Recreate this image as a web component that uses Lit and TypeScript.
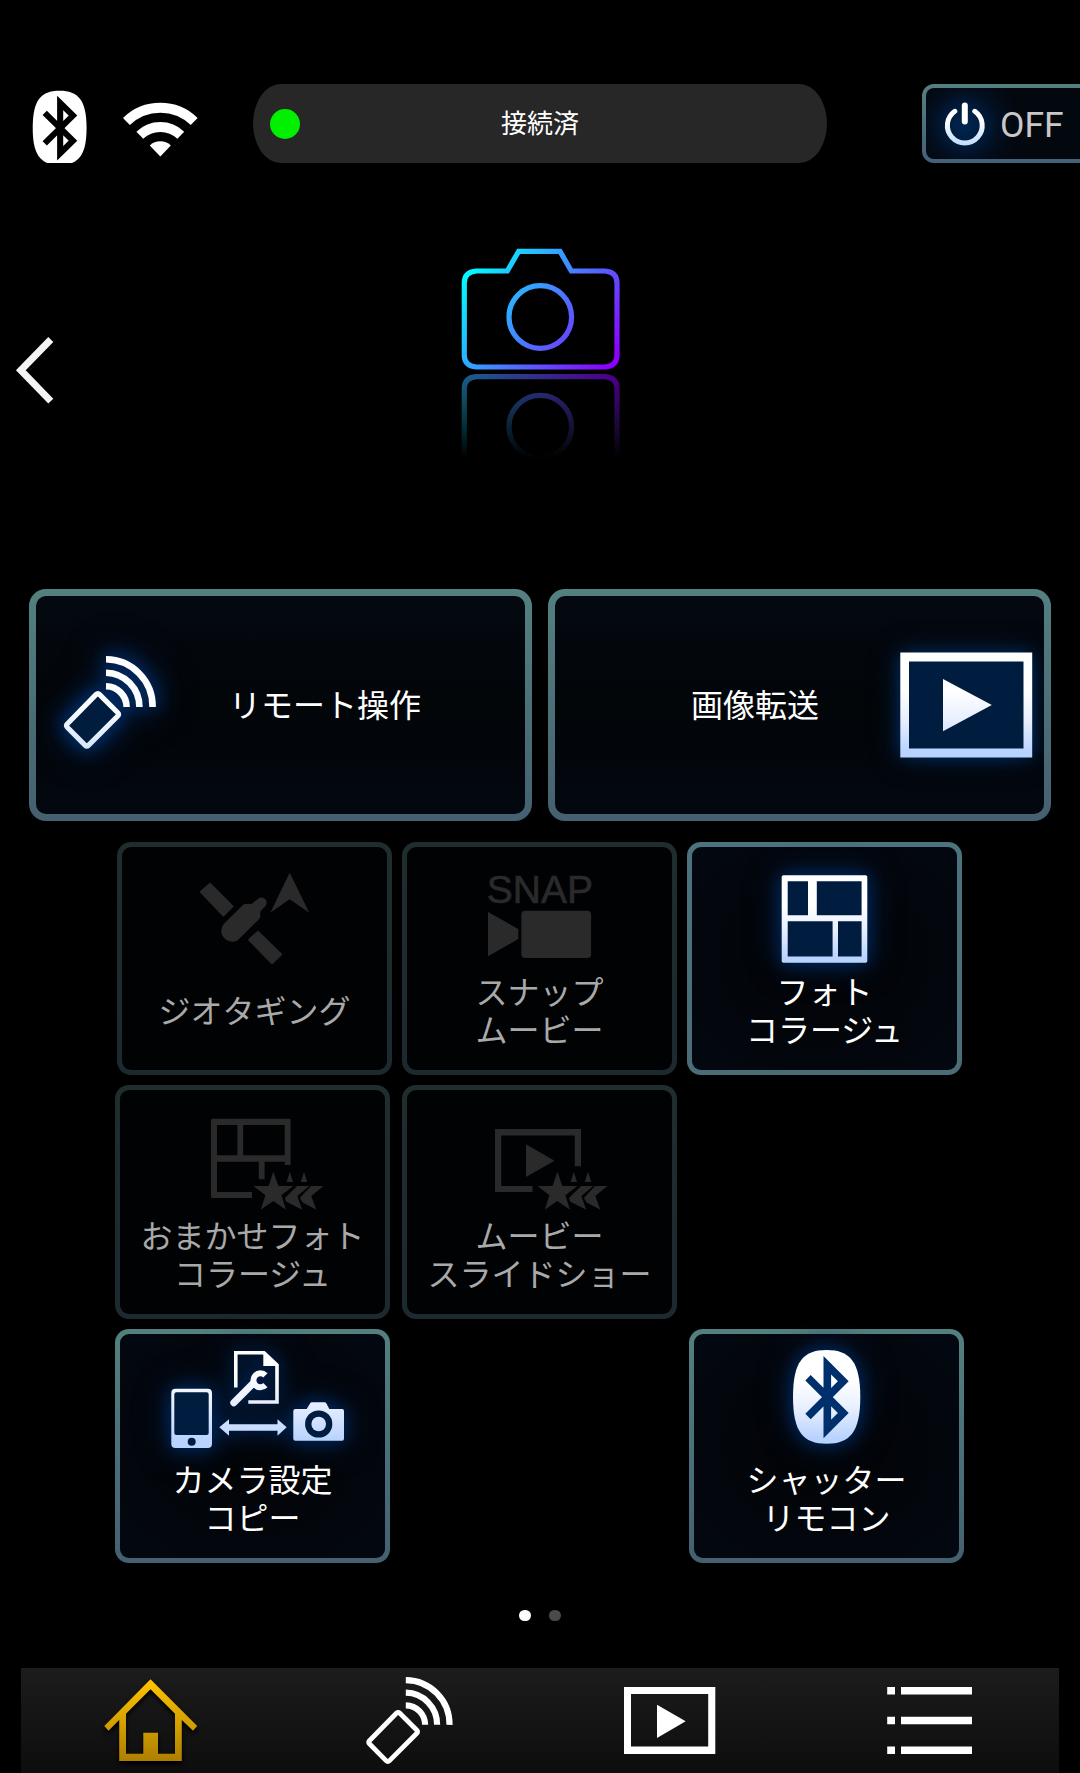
import { LitElement, html, svg, css } from "lit";
import { customElement, property } from "lit/decorators.js";

/* Handheld remote with three signal arcs, on a 92 x 93 canvas. */
const remoteShape = () => svg`
  <path class="line" stroke-width="5.1" stroke-linejoin="round"
    d="M32.2 38.4Q33.8 36.8 35.4 38.4L53.8 56.8Q55.4 58.4 53.8 60L24.4 89.4Q22.8 91 21.2 89.4L3.2 71.2Q1.6 69.6 3.2 68Z"/>
  <path class="line" stroke-width="6.6" d="M42 3.3A47 47 0 0 1 88.6 51M42 16.7A34 34 0 0 1 75.4 51M42 30.2A20.8 20.8 0 0 1 62.6 51"/>`;

const btRune = () => svg`
  <path class="rune" d="M808 1377.7L843.3 1413L827.3 1429V1365.2L843.3 1381.2L808 1416.5"/>`;

const btOval =
  "M826.6 1350C850 1350 860.3 1362 860.3 1397S850 1443.7 826.6 1443.7S793 1432 793 1397S803 1350 826.6 1350Z";

/* A star followed by the trailing edges of two more. */
const starTrail = () => svg`
  <path class="solid" d="M273.4 1171.7L278.4 1186H293.3L281.4 1195.3L286 1209.7L273.4 1201L260.7 1209.7L265.4 1195.3L253.5 1186H268.6Z
    M289.8 1171.7L293 1182H286.6ZM304 1171.7L307.2 1182H300.8Z
    M297.1 1186H309.4L297.3 1196L302.2 1209.7L286 1201.5L285 1198L288.5 1194.5Z
    M311.1 1186H323.4L311.3 1196L316.4 1209.7L302.6 1202.5L300 1198L303.5 1194Z"/>`;

const icons: Record<string, () => unknown> = {
  remote: () => svg`<g transform="translate(64 656)">
    <path class="pit" d="M34 38L54 58L23 90L3 70Z"/>${remoteShape()}</g>`,
  transfer: () => svg`
    <rect class="pit" x="902" y="655" width="128" height="100"/>
    <path class="solid" fill-rule="evenodd" d="M900.3 652.6H1032.2V757.4H900.3ZM909 661.5V748.5H1023.5V661.5Z"/>
    <path class="solid" d="M943 679L991.8 705L943 731.3Z"/>`,
  geo: () => svg`
    <path class="solid round" d="M201.2 891.8L210 884.2L232.2 906.4L223.4 915.2ZM249.5 939.8L258 932.2L280.8 954.4L272 962.8Z"/>
    <path class="solid" d="M289.7 872.7L309.3 912.7L289.7 899.3L270.3 912.7Z"/>
    <path class="solid" d="M243.5 904.5Q246 903.4 251.5 904L258 898.9A5 5 0 0 1 265 906.5L260.3 911.5V916.5Q260.3 918 258.5 919.8L239.5 938.5C233 946 220 939 221.3 930Q221.6 926.2 224.2 923.6Z"/>`,
  snap: () => svg`
    <text class="snap" x="486.8" y="903.4">SNAP</text>
    <path class="solid" d="M488 912L518.3 929V939L488 956.3Z"/>
    <rect class="solid" x="521.3" y="910.7" width="69.8" height="47.3" rx="4"/>`,
  collage: () => svg`
    <rect class="pit" x="784" y="878" width="81" height="82"/>
    <path class="solid" fill-rule="evenodd" d="M783 875.3H866L867.3 876.6V961.4L866 962.7H783L781.7 961.4V876.6Z
      M787.7 881.2V915.2H808V881.2ZM816.8 881.2V915.2H861.6V881.2ZM787.7 921.2V956.5H832.6V921.2ZM838 921.2V956.5H861.6V921.2Z"/>`,
  autoCollage: () => svg`
    <path class="solid" d="M212 1118.7H289.6L290.6 1119.7V1165H284.7V1161.7H264.6V1179.3H258.8V1161.7H217V1192H252V1198H212L211 1197V1119.7ZM217 1125V1155.3H237.4V1125ZM243.2 1125V1155.3H284.7V1125Z" fill-rule="evenodd"/>
    ${starTrail()}`,
  slideshow: () => svg`
    <path class="solid" d="M495 1129H581V1166.3H574.8V1135.4H501.2V1186H532.5V1192H495ZM526 1144.3L554.6 1160.7L526 1177Z"/>
    <g transform="translate(284 0)">${starTrail()}</g>`,
  copy: () => svg`
    <rect class="pit" x="173" y="1390" width="37" height="54" rx="4"/>
    <circle class="pit" cx="318.7" cy="1424" r="14"/>
    <path class="solid" fill-rule="evenodd" d="M175.5 1388.7H207.8Q212 1388.7 212 1393V1443.8Q212 1448 207.8 1448H175.5Q171.3 1448 171.3 1443.8V1393Q171.3 1388.7 175.5 1388.7Z
      M176.5 1392.3Q174.3 1392.3 174.3 1394.5V1433Q174.3 1435 176.3 1435H206.7Q208.7 1435 208.7 1433V1394.5Q208.7 1392.3 206.5 1392.3Z
      M191.7 1437.7A4 4 0 1 0 191.7 1445.7A4 4 0 1 0 191.7 1437.7Z"/>
    <path class="line" stroke-width="3.6" d="M235.8 1387.5V1352.8H264L277 1365V1402H248.3"/>
    <path class="solid" d="M263.3 1352L278 1366H263.3Z"/>
    <path class="line" stroke-width="7" stroke-linecap="round" d="M233.8 1402.8L252.5 1384"/>
    <path class="line" stroke-width="6" d="M265.4 1375.4A7 7 0 1 0 265.4 1385.2"/>
    <path class="solid" d="M219.3 1427.3L229 1419.3V1424.3H277.5V1419.3L286.7 1427.3L277.5 1435.7V1430.7H229V1435.7Z"/>
    <path class="solid" fill-rule="evenodd" d="M295.5 1409H306.7L310 1403.4Q310.7 1402.3 312 1402.3H324.5Q325.8 1402.3 326.4 1403.4L329.3 1409H342Q344 1409 344 1411V1438.7Q344 1440.7 342 1440.7H295.5Q293.3 1440.7 293.3 1438.7V1411Q293.3 1409 295.5 1409Z
      M318.7 1410.4A13.6 13.6 0 1 0 318.7 1437.6A13.6 13.6 0 1 0 318.7 1410.4Z"/>
    <circle class="solid" cx="318.7" cy="1424" r="7.3"/>`,
  bluetooth: () => svg`<path class="solid" d=${btOval}/>${btRune()}`,
};

/* Vertical extent of the white-to-blue shading of each lit icon. */
const shades: Record<string, [number, number]> = {
  remote: [10, 96],
  transfer: [690, 752],
  collage: [905, 958],
  copy: [1370, 1440],
  bluetooth: [1380, 1438],
};

@customElement("menu-tile")
class MenuTile extends LitElement {
  @property() icon = "";
  @property() box = "";
  @property({ type: Array }) lines: string[] = [];
  @property({ type: Boolean, reflect: true }) dim = false;
  @property({ type: Boolean, reflect: true }) wide = false;
  @property({ type: Boolean, reflect: true }) flip = false;

  static styles = css`
    :host {
      display: flex;
      flex-direction: column;
      box-sizing: border-box;
      width: 275px;
      border: 5px solid transparent;
      border-radius: 14px;
      background:
        radial-gradient(ellipse at 50% 50%, #020407 20%, #03070f 90%) padding-box,
        linear-gradient(#53807f, #4a6f7a 55%, #456070) border-box;
      color: #fff;
    }
    :host([icon="collage"]) {
      background:
        radial-gradient(ellipse at 50% 50%, #020407 20%, #03070f 90%) padding-box,
        linear-gradient(#4c747e, #4a6c76) border-box;
    }
    :host([dim]) {
      background:
        linear-gradient(#010204, #010204) padding-box,
        linear-gradient(#1f2d2f, #1c2a30) border-box;
      color: #a9a9a9;
    }
    :host([wide]) {
      flex-direction: row;
      width: 503px;
      border-width: 7px;
      border-radius: 17px;
      background:
        linear-gradient(#040810, #020609 50%, #03070f) padding-box,
        linear-gradient(#548080, #456070) border-box;
    }
    :host([flip]) {
      flex-direction: row-reverse;
    }
    .art {
      display: block;
      flex: none;
      overflow: visible;
      filter: drop-shadow(0 0 8px #00285c) drop-shadow(0 0 14px #001e48);
    }
    :host([icon="remote"]) .art {
      filter: drop-shadow(0 0 8px #002f6a) drop-shadow(0 0 10px #002450) drop-shadow(0 0 14px #001634);
    }
    :host([icon="transfer"]) .art {
      overflow: hidden;
      filter: none;
    }
    :host([icon="transfer"]) .pit {
      filter: drop-shadow(0 0 8px #003068) drop-shadow(0 0 12px #001c40);
    }
    :host([dim]) .art {
      filter: none;
    }
    .solid {
      fill: url(#sheen);
    }
    .line {
      fill: none;
      stroke: url(#sheen);
    }
    .pit {
      fill: #001d40;
    }
    .rune {
      fill: none;
      stroke: #00306c;
      stroke-width: 7.6;
      stroke-miterlimit: 4;
    }
    :host([dim]) .solid {
      fill: #2a2a2b;
    }
    :host([dim]) .round {
      stroke: #2a2a2b;
      stroke-width: 2.5;
      stroke-linejoin: round;
    }
    .snap {
      font: 39px "Liberation Sans", sans-serif;
      fill: #2a2a2b;
      stroke: #2a2a2b;
      stroke-width: 0.6;
    }
    .label {
      flex: 1;
      display: flex;
      flex-direction: column;
      align-items: center;
      justify-content: center;
      padding-bottom: 6px;
      font: 400 32px/38px "Noto Sans CJK JP", sans-serif;
      white-space: nowrap;
      z-index: 1;
    }
    :host([wide]) .label {
      padding: 0 61px 4px 0;
    }
    :host([flip]) .label {
      padding: 0 0 4px 91px;
    }
  `;

  render() {
    const [, y, w, h] = this.box.split(" ").map(Number);
    const [top, bottom] = shades[this.icon] ?? [y, y + h];
    const remote = this.icon === "remote";
    return html`
      <svg class="art" width=${w} height=${h} viewBox=${this.box}>
        <defs>
          <linearGradient id="sheen" gradientUnits="userSpaceOnUse" x1="0" x2="0" y1=${top} y2=${bottom}>
            <stop offset="0" stop-color="#fff"></stop>
            <stop offset=".5" stop-color=${remote ? "#fbfcff" : "#e6eeff"}></stop>
            <stop offset="1" stop-color=${remote ? "#cfe4f8" : "#b9d3ff"}></stop>
          </linearGradient>
        </defs>
        ${icons[this.icon]?.()}
      </svg>
      <div class="label">${this.lines.map((t) => html`<span>${t}</span>`)}</div>
    `;
  }
}

@customElement("app-root")
class AppRoot extends LitElement {
  static styles = css`
    :host {
      display: flex;
      flex-direction: column;
      box-sizing: border-box;
      width: 1080px;
      height: 1773px;
      padding-top: 84px;
      overflow: hidden;
      background: #000;
      color: #fff;
      font-family: "Noto Sans CJK JP", sans-serif;
    }
    svg {
      display: block;
      flex: none;
    }
    .header {
      display: flex;
      height: 79px;
    }
    .status-icons {
      overflow: hidden;
    }
    .rune {
      fill: none;
      stroke: #000;
      stroke-width: 7.6;
    }
    .pill {
      display: grid;
      grid-template-columns: 30px 1fr 30px;
      align-items: center;
      box-sizing: border-box;
      width: 574px;
      padding: 0 17px;
      margin-right: 95px;
      border-radius: 28px / 40px;
      background: #272727;
      font-size: 26px;
      line-height: 38px;
      text-align: center;
    }
    .caption {
      padding-bottom: 3px;
    }
    .led {
      width: 30px;
      height: 30px;
      border-radius: 50%;
      background: #00f000;
    }
    .power {
      display: flex;
      align-items: center;
      box-sizing: border-box;
      width: 158px;
      border: 4.5px solid transparent;
      border-right: 0;
      border-radius: 12px 0 0 12px;
      background:
        radial-gradient(circle at 39px 37px, #002550 0, #001c3e 18px, #030d1c 36px, #03070e 56px) padding-box,
        linear-gradient(#54807f, #45607a) border-box;
      color: #c8c8c8;
      font: 400 35.5px/40px Roboto, sans-serif;
    }
    .power-label {
      padding-top: 3px;
    }
    .hero {
      display: grid;
      grid-template-columns: 1fr auto 1fr;
      align-items: start;
      height: 426px;
    }
    .back {
      margin-top: 167px;
    }
    .camera {
      margin-top: 82px;
    }
    .primary {
      display: flex;
      gap: 16px;
      height: 232px;
      padding-left: 29px;
      margin-bottom: 21px;
    }
    .row {
      display: flex;
      gap: 12px;
      height: 234px;
      margin: 0 0 10px 115px;
    }
    .row.first {
      gap: 10px;
      height: 233px;
      margin-left: 117px;
    }
    .row.last {
      width: 849px;
      justify-content: space-between;
      margin-bottom: 0;
    }
    .pager {
      flex: 1;
      display: flex;
      align-items: center;
      justify-content: center;
      gap: 18.5px;
    }
    .dot {
      width: 11.5px;
      height: 11.5px;
      border-radius: 50%;
      background: #4a4a4a;
    }
    .dot.on {
      background: #fff;
    }
    .nav {
      display: grid;
      grid-template-columns: repeat(4, 1fr);
      height: 105px;
      margin: 0 21px;
      background: linear-gradient(#1c1c1c, #0d0d0d);
    }
    .nav .line {
      fill: none;
      stroke: #fff;
    }
    .house {
      filter: drop-shadow(0 3px 2px #000);
    }
  `;

  private camera() {
    return svg`
      <path d="M507.3 271H476.3Q464.3 272 464.3 283V355Q464.3 366 476.3 367H605Q617 366 617 355V283Q617 272 605 271H571.3L560 251.3H518.7L507.3 271Z"/>
      <circle cx="540.3" cy="317" r="31.3"/>`;
  }

  render() {
    return html`
      <div class="header">
        <svg class="status-icons" width="253" height="79" viewBox="0 84 253 79">
          <g transform="translate(59.6 128) scale(.8 .79) translate(-826.6 -1397)">
            <path fill="#fff" d=${btOval}></path>${btRune()}
          </g>
          <g transform="translate(160.3 156.5) scale(.985)" fill="none" stroke="#fff">
            <path stroke-width="10" d="M-34.4 -35.6A49.5 49.5 0 0 1 34.4 -35.6M-20.8 -21.6A30 30 0 0 1 20.8 -21.6"></path>
            <path fill="#fff" stroke="none" d="M0 0L-10.7 -11.2A15.5 15.5 0 0 1 10.7 -11.2Z"></path>
          </g>
        </svg>
        <div class="pill"><span class="led"></span><span class="caption">接続済</span></div>
        <div class="power">
          <svg width="74" height="70" viewBox="926.5 88.5 74 70" fill="none" stroke-linecap="round">
            <defs>
              <linearGradient id="ring" gradientUnits="userSpaceOnUse" x1="0" y1="120" x2="0" y2="145">
                <stop offset="0" stop-color="#fff"></stop>
                <stop offset="1" stop-color="#bfdcff"></stop>
              </linearGradient>
            </defs>
            <path stroke="url(#ring)" stroke-width="5" d="M955.3 110.8A17.4 17.4 0 1 0 975.3 110.8"></path>
            <path stroke="#fff" stroke-width="6" d="M965.3 105V121"></path>
          </svg>
          <span class="power-label">OFF</span>
        </div>
      </div>

      <div class="hero">
        <svg class="back" width="60" height="80" viewBox="0 330 60 80" fill="none">
          <path stroke="#f4f4f4" stroke-width="7" d="M50.8 339.5L20.8 370.3L50.8 401.1"></path>
        </svg>
        <svg class="camera" width="160" height="215" viewBox="460 245 160 215" fill="none">
          <defs>
            <linearGradient id="neon" gradientUnits="userSpaceOnUse" x1="472" y1="262" x2="608" y2="367">
              <stop offset="0" stop-color="#00ffff"></stop>
              <stop offset="1" stop-color="#8c00ff"></stop>
            </linearGradient>
            <linearGradient id="fade" gradientUnits="userSpaceOnUse" x1="0" y1="374" x2="0" y2="458">
              <stop offset="0" stop-color="#fff" stop-opacity=".56"></stop>
              <stop offset="1" stop-color="#fff" stop-opacity="0"></stop>
            </linearGradient>
            <mask id="mirror" maskUnits="userSpaceOnUse" x="460" y="370" width="160" height="90">
              <rect x="460" y="370" width="160" height="88" fill="url(#fade)"></rect>
            </mask>
          </defs>
          <g stroke="url(#neon)" stroke-width="5.2">${this.camera()}</g>
          <g mask="url(#mirror)">
            <g stroke="url(#neon)" stroke-width="5.2" transform="translate(0 743.7) scale(1 -1)">${this.camera()}</g>
          </g>
        </svg>
      </div>

      <div class="primary">
        <menu-tile wide icon="remote" box="36 596 150 218" .lines=${["リモート操作"]}></menu-tile>
        <menu-tile wide flip icon="transfer" box="864 596 180 218" .lines=${["画像転送"]}></menu-tile>
      </div>

      <div class="row first">
        <menu-tile dim icon="geo" box="122 847 265 106" .lines=${["ジオタギング"]}></menu-tile>
        <menu-tile dim icon="snap" box="407 847 265 106" .lines=${["スナップ", "ムービー"]}></menu-tile>
        <menu-tile icon="collage" box="692 847 265 106" .lines=${["フォト", "コラージュ"]}></menu-tile>
      </div>
      <div class="row">
        <menu-tile dim icon="autoCollage" box="120 1090 265 108" .lines=${["おまかせフォト", "コラージュ"]}></menu-tile>
        <menu-tile dim icon="slideshow" box="407 1090 265 108" .lines=${["ムービー", "スライドショー"]}></menu-tile>
      </div>
      <div class="row last">
        <menu-tile icon="copy" box="120 1334 265 107" .lines=${["カメラ設定", "コピー"]}></menu-tile>
        <menu-tile icon="bluetooth" box="694 1334 265 107" .lines=${["シャッター", "リモコン"]}></menu-tile>
      </div>

      <div class="pager"><span class="dot on"></span><span class="dot"></span></div>

      <div class="nav">
        <svg width="259" height="105" viewBox="21 1668 259 105">
          <defs>
            <linearGradient id="gold" gradientUnits="userSpaceOnUse" x1="0" y1="1680" x2="0" y2="1761">
              <stop offset="0" stop-color="#ffc400"></stop>
              <stop offset="1" stop-color="#ae7f00"></stop>
            </linearGradient>
          </defs>
          <path class="house" fill="url(#gold)" fill-rule="evenodd"
            d="M150.5 1679.3L197.2 1726L193 1730.7L181.8 1720V1761H119.2V1720L108.5 1730.7L104.3 1726ZM150.5 1689.3L126 1713.7V1753.7H143.3V1732.7H158V1753.7H175V1713.7Z"></path>
        </svg>
        <svg width="259" height="105" viewBox="281 1668 259 105">
          <g transform="translate(366.4 1677) scale(.938)">
            ${remoteShape()}
          </g>
        </svg>
        <svg width="259" height="105" viewBox="540 1668 259 105" fill="#fff">
          <path fill-rule="evenodd" d="M624 1687H715.3V1754H624ZM631 1694V1746.5H708.2V1694Z"></path>
          <path d="M657 1704.7L685.7 1721.3L657 1738Z"></path>
        </svg>
        <svg width="259" height="105" viewBox="800 1668 259 105" fill="#fff">
          <path d="M887.2 1687H895V1694.6H887.2ZM901 1687H972V1694.6H901ZM887.2 1716.7H895V1724.3H887.2ZM901 1716.7H972V1724.3H901ZM887.2 1746.4H895V1754H887.2ZM901 1746.4H972V1754H901Z"></path>
        </svg>
      </div>
    `;
  }
}
